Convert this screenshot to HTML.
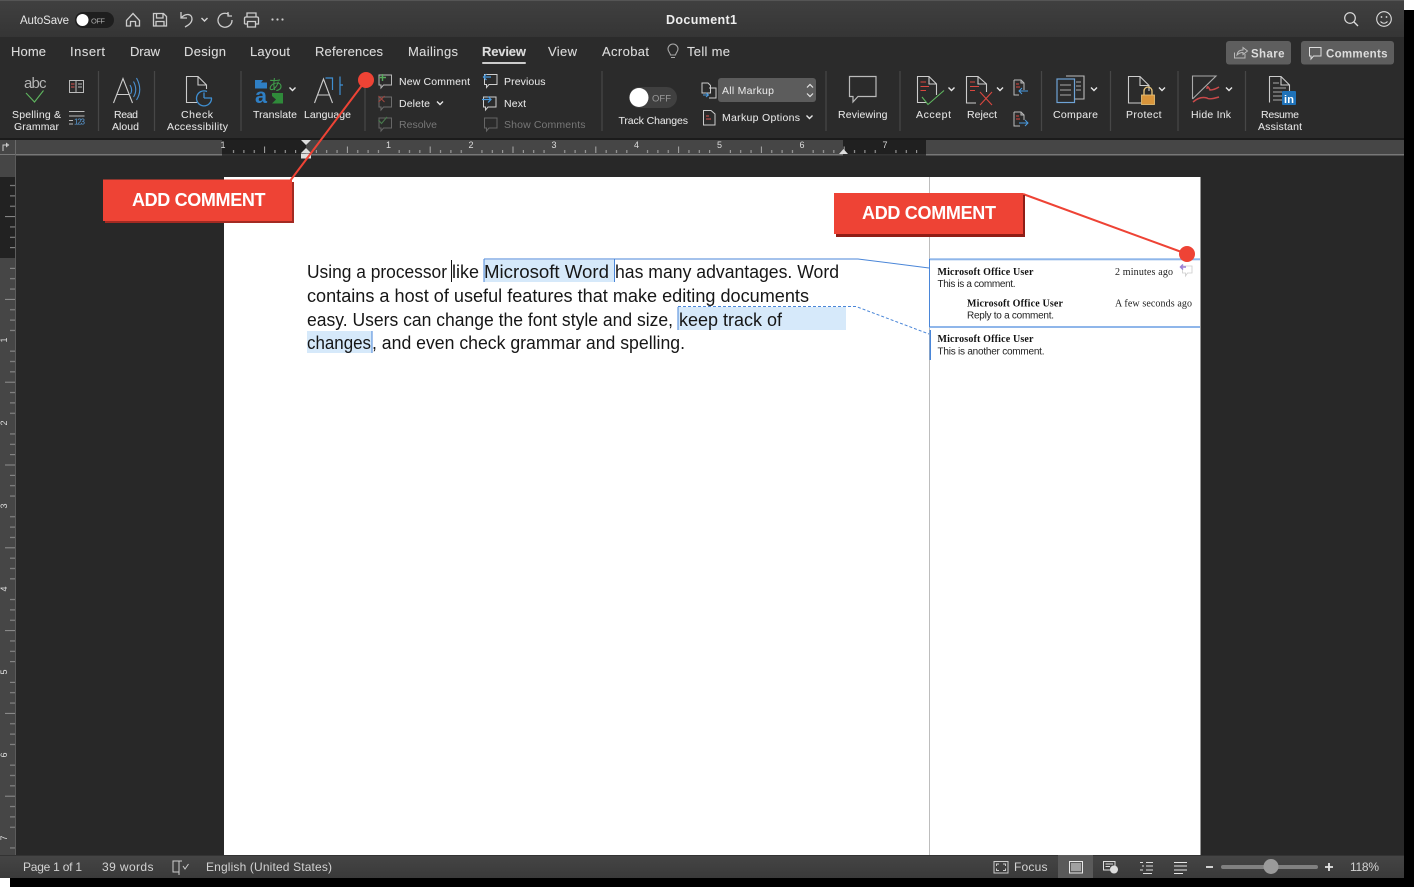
<!DOCTYPE html>
<html><head><meta charset="utf-8"><title>Document1</title>
<style>
html,body{margin:0;padding:0;background:#fff;width:1415px;height:888px;overflow:hidden}
svg{display:block}
text{font-family:"Liberation Sans",sans-serif;fill:#e6e6e6}
.m{font-size:13px;fill:#dcdcdc;stroke:rgba(225,225,225,.35);stroke-width:.25px}
.r{font-size:10.5px;fill:#e8e8e8;stroke:rgba(225,225,225,.25);stroke-width:.2px}
.d{fill:#777;stroke:none}
.s{font-size:12px;fill:#d2d2d2}
.t{font-size:18.5px;fill:#161616}
.cb{font-family:"Liberation Serif",serif;font-size:10px;font-weight:700;fill:#111}
.cs{font-family:"Liberation Serif",serif;font-size:10px;fill:#222}
.c{font-size:10px;fill:#222}
.n{font-size:9px;fill:#ddd}
.cal{font-size:18px;font-weight:700;fill:#fff}
.i{fill:none;stroke:#c8c8c8;stroke-width:1.1}
</style></head><body>
<svg width="1415" height="888" viewBox="0 0 1415 888" xmlns="http://www.w3.org/2000/svg">
<defs>
<linearGradient id="tb" x1="0" y1="0" x2="0" y2="1"><stop offset="0" stop-color="#404040"/><stop offset="1" stop-color="#353535"/></linearGradient>
<linearGradient id="sb" x1="0" y1="0" x2="0" y2="1"><stop offset="0" stop-color="#454545"/><stop offset="1" stop-color="#3a3a3a"/></linearGradient>
<pattern id="hr" x="306" y="140" width="82.8" height="15" patternUnits="userSpaceOnUse">
<path d="M10.35 10v3M20.7 10v3M31.05 10v3M41.4 6.5v6.5M51.75 10v3M62.1 10v3M72.45 10v3" stroke="#a8a8a8" stroke-width="1" fill="none"/>
</pattern>
<pattern id="vr" x="0" y="258" width="15" height="82.8" patternUnits="userSpaceOnUse">
<path d="M10 10.35h5M10 20.7h5M10 31.05h5M5 41.4h10M10 51.75h5M10 62.1h5M10 72.45h5" stroke="#8f8f8f" stroke-width="1" fill="none"/>
</pattern>
<path id="chev" d="M-3-1.5L0 1.5L3-1.5" fill="none" stroke="#e6e6e6" stroke-width="1.4"/>
<path id="bub" d="M1.5 1H14V11H6L3.5 14V11H1.5Z"/>
</defs>

<rect x="10" y="10" width="1404" height="877" fill="#000"/>
<rect width="1404" height="878" fill="#282828"/>

<!-- title bar -->
<rect width="1404" height="37" fill="url(#tb)"/>
<rect width="1404" height="1" fill="#555"/>
<text x="20" y="24" font-size="11.5" fill="#ddd" textLength="49">AutoSave</text>
<rect x="75" y="12" width="39" height="16" rx="8" fill="#1e1e1e"/>
<circle cx="82.500" cy="20" r="6" fill="#fff"/>
<text x="91" y="23.500" font-size="7.500" style="fill:#aaa" textLength="14">OFF</text>
<path class="i" style="stroke:#ccc;stroke-width:1.3" d="M126.500 20.500L133 13.500L139.500 20.500V26H135.500V21.500H130.500V26H126.500Z"/>
<path class="i" style="stroke:#ccc;stroke-width:1.3" d="M153.500 13.500H163.500L166.500 16.500V26H153.500ZM156.500 13.500V18H163V13.500M156 26V21.500H164V26"/>
<path class="i" style="stroke:#ccc;stroke-width:1.3" d="M181 12V18H187M181 18C186 12.500 192 14 192 19C192 22 189 25 185 27"/>
<use href="#chev" x="204.500" y="19.500" style="opacity:.9"/>
<path class="i" style="stroke:#ccc;stroke-width:1.3" d="M229 14.500A7 7 0 1 0 232 20M228 12V16H232"/>
<path class="i" style="stroke:#ccc;stroke-width:1.3" d="M247 17V13H256V17M244.500 24V18.500Q244.500 17 246 17H257Q258.500 17 258.500 18.500V24H255M248 24H244.500M247.500 21.500H255.500V27H247.500Z"/>
<g fill="#ccc"><circle cx="272.500" cy="19.500" r="1.100"/><circle cx="277.500" cy="19.500" r="1.100"/><circle cx="282.500" cy="19.500" r="1.100"/></g>
<text x="666" y="24" font-size="12.500" font-weight="700" style="fill:#eee" textLength="71">Document1</text>
<circle cx="1350" cy="18" r="5.300" fill="none" stroke="#ddd" stroke-width="1.200"/><path d="M1354 22L1358 26" stroke="#ddd" stroke-width="1.300"/>
<circle cx="1384" cy="19" r="7.300" fill="none" stroke="#ddd" stroke-width="1.100"/><circle cx="1381.500" cy="17" r=".9" fill="#ddd"/><circle cx="1386.500" cy="17" r=".9" fill="#ddd"/><path d="M1380.500 21.500Q1384 25 1387.500 21.500" fill="none" stroke="#ddd"/>

<!-- ribbon -->
<rect y="37" width="1404" height="101" fill="#2b2b2b"/>
<text class="m" x="11" y="56" textLength="35">Home</text>
<text class="m" x="70" y="56" textLength="35">Insert</text>
<text class="m" x="130" y="56" textLength="30">Draw</text>
<text class="m" x="184" y="56" textLength="42">Design</text>
<text class="m" x="250" y="56" textLength="40">Layout</text>
<text class="m" x="315" y="56" textLength="68">References</text>
<text class="m" x="408" y="56" textLength="50">Mailings</text>
<text class="m" x="482" y="56" textLength="44" style="font-weight:700">Review</text>
<rect x="482" y="62" width="44" height="2" rx="1" fill="#ccc"/>
<text class="m" x="548" y="56" textLength="29">View</text>
<text class="m" x="602" y="56" textLength="47">Acrobat</text>
<text class="m" x="687" y="56" textLength="43">Tell me</text>
<path d="M670.500 55C670 52.500 668 51.500 668 49A5 5 0 0 1 678 49C678 51.500 676 52.500 675.500 55ZM671 57.500H675" fill="none" stroke="#aaa" stroke-width="1.100"/>

<rect x="1226" y="41" width="65" height="23.500" rx="3" fill="#5e5e5e"/>
<path d="M1234.500 52.500V58H1245V54M1237 55C1237.500 51.500 1240 50 1243 50V47.500L1247.500 51L1243 54.500V52.500C1240.500 52.500 1238.500 53.500 1237 55Z" fill="none" stroke="#bbb" stroke-width="1"/>
<text x="1251" y="57.500" font-size="11.500" font-weight="700" style="fill:#ddd" textLength="33.500">Share</text>
<rect x="1301" y="41" width="93" height="23.500" rx="3" fill="#5e5e5e"/>
<path d="M1309.500 47.500H1321V56H1313.500L1311 59V56H1309.500Z" fill="none" stroke="#ddd" stroke-width="1"/>
<text x="1326" y="57.500" font-size="11.500" font-weight="700" style="fill:#ddd" textLength="61.500">Comments</text>

<!-- separators -->
<path d="M98.500 71V131M154.500 71V131M241 71V131M365 80V131M602 71V131M826 71V131M900 71V131M1041.500 71V131M1110.500 71V131M1178 71V131M1245.500 71V131" stroke="#474747" stroke-width="1.200"/>

<!-- proofing -->
<text x="24" y="88" font-size="15" style="fill:#b5b5b5" textLength="22.500">abc</text>
<path d="M26 93L34.500 102L43.500 90.500" fill="none" stroke="#5fb65f" stroke-width="1.100"/>
<path d="M69.500 80.500H76V92.500H69.500ZM76 80.500H83.500V92.500H76M78 84H82M78 87H82" fill="none" stroke="#bbb" stroke-width="1"/>
<path d="M71 84H74.500M71 87H74.500" stroke="#d9534f" fill="none"/>
<path d="M69 111.500H84.500M69 116H84.500M69 120.500H73M69 124H73" stroke="#bbb" stroke-width="1" fill="none"/>
<text x="74" y="124.500" font-size="8" style="fill:#5a9bd5" textLength="11">123</text>
<text class="r" x="12" y="118" textLength="49">Spelling &amp;</text>
<text class="r" x="14" y="130" textLength="45">Grammar</text>

<path d="M113.500 103L123 78.500L132.500 103M117 94.500H129.500" fill="none" stroke="#ccc" stroke-width="1.100"/>
<path d="M130 85Q133 90 130.500 94M133.500 81.500Q138 90 133.500 97M136.500 78Q143 90 136.500 100" fill="none" stroke="#4a90d0" stroke-width="1.100"/>
<text class="r" x="114" y="118" textLength="24">Read</text>
<text class="r" x="112" y="130" textLength="27">Aloud</text>

<path d="M197 102.500H186.500V76.500H198L206.500 85V89M198 76.500V85H206.500" fill="none" stroke="#ccc" stroke-width="1.100"/>
<path d="M207 91.500A7.500 7.500 0 1 0 211.500 98M204 98V92.500M204 98H212" fill="none" stroke="#3f8fd2" stroke-width="1.300"/>
<text class="r" x="181" y="118" textLength="32">Check</text>
<text class="r" x="167" y="130" textLength="61">Accessibility</text>

<path d="M255 80L263 80L261 82.500H267V88.500H255Z" fill="#2f7fc4"/>
<path d="M272 93H283V103.500H272L276 99.500L272 96Z" fill="#2f8a3a"/>
<text x="255" y="103" font-size="21" font-weight="700" style="fill:#2f7fc4" textLength="12" lengthAdjust="spacingAndGlyphs">a</text>
<text x="268" y="90" font-size="15" style="font-family:'Noto Sans CJK JP',sans-serif;fill:#3f9a4a" textLength="15">あ</text>
<use href="#chev" x="292.500" y="89"/>
<text class="r" x="253" y="118" textLength="44">Translate</text>

<path d="M314.500 103L323.500 79L332.500 103M318 95H329.500" fill="none" stroke="#ccc" stroke-width="1.100"/>
<path d="M325.500 78H332.500V90M340 76.500V95M340 85H343" fill="none" stroke="#3f8fd2" stroke-width="1.200"/>
<text class="r" x="304" y="118" textLength="47">Language</text>

<!-- comment commands -->
<g transform="translate(377.500 74)"><use href="#bub" fill="none" stroke="#b8b8b8"/><path d="M5 0V7M1.500 3.500H8.500" stroke="#58a85c" stroke-width="1.400" fill="none"/></g>
<text class="r" x="399" y="85" textLength="71">New Comment</text>
<g transform="translate(377.500 96)"><use href="#bub" fill="none" stroke="#6d6d6d"/><path d="M1 0L7 6M7 0L1 6" stroke="#a0463f" stroke-width="1" fill="none"/></g>
<text class="r" x="399" y="107" textLength="31">Delete</text>
<use href="#chev" x="440" y="103"/>
<g transform="translate(377.500 117)"><use href="#bub" fill="none" stroke="#666"/><path d="M1 3L4 6.500L9.500 0" stroke="#48794c" stroke-width="1.100" fill="none"/></g>
<text class="r d" x="399" y="128" textLength="38">Resolve</text>

<g transform="translate(483 73.500)"><use href="#bub" fill="none" stroke="#cfcfcf"/><path d="M8 3.500H0.500M3.500 .5L.5 3.500L3.500 6.500" stroke="#4a9be0" stroke-width="1.200" fill="none"/></g>
<text class="r" x="504" y="85" textLength="41.500">Previous</text>
<g transform="translate(482 96)"><use href="#bub" fill="none" stroke="#cfcfcf"/><path d="M0 3.500H9M6 .5L9 3.500L6 6.500" stroke="#4a9be0" stroke-width="1.200" fill="none"/></g>
<text class="r" x="504" y="107" textLength="22">Next</text>
<g transform="translate(483 117)"><use href="#bub" fill="none" stroke="#666"/></g>
<text class="r d" x="504" y="128" textLength="81.500">Show Comments</text>

<!-- track changes -->
<rect x="629" y="87" width="48" height="21" rx="10.500" fill="#404040"/>
<circle cx="639" cy="97.500" r="9.500" fill="#fff"/>
<text x="652" y="101.500" font-size="9.500" style="fill:#999" textLength="19">OFF</text>
<text class="r" x="618.500" y="124" textLength="69.500">Track Changes</text>
<path d="M702 83H708L710.500 85.500V93H702ZM709 88H716V98H709" fill="none" stroke="#ccc" stroke-width="1"/>
<path d="M703 95H708M706 93L708.500 95L706 97" fill="none" stroke="#4a9be0"/>
<rect x="718" y="78" width="98" height="24" rx="3" fill="#5c5c5c"/>
<text class="r" x="722" y="94" textLength="52">All Markup</text>
<path d="M807 87.500L810 84.500L813 87.500M807 93.500L810 96.500L813 93.500" fill="none" stroke="#e6e6e6" stroke-width="1.200"/>
<path d="M703.500 110.500H711L715 114V125H703.500Z" fill="none" stroke="#ccc" stroke-width="1"/><path d="M706 116H709M706 119H711" stroke="#d9534f"/>
<text class="r" x="722" y="121" textLength="78">Markup Options</text>
<use href="#chev" x="809.500" y="117"/>

<path d="M849.500 76.500H876V96.500H858L853 102V96.500H849.500Z" fill="none" stroke="#bbb" stroke-width="1.200"/>
<text class="r" x="838" y="118" textLength="49.500">Reviewing</text>

<path d="M927 102.500H917.500V76.500H929L936.500 84V95M929 76.500V84H936.500" fill="none" stroke="#ccc" stroke-width="1.100"/>
<path d="M920.500 82H926M920.500 86.500H929M920.500 90.500H926" stroke="#d9473f" stroke-width="1" fill="none"/>
<path d="M922 97L928 104.500L944 90.500" fill="none" stroke="#5fb65f" stroke-width="1.100"/>
<text class="r" x="916" y="118" textLength="35">Accept</text>
<use href="#chev" x="951.500" y="89"/>

<path d="M976 103H966.500V76.500H978L986.500 84V92M978 76.500V84H986.500" fill="none" stroke="#ccc" stroke-width="1.100"/>
<path d="M970 82H975M970 86.500H979M970 90.500H975" stroke="#d9473f" stroke-width="1" fill="none"/>
<path d="M980 92L992 105M992 92L980 105" stroke="#d9473f" stroke-width="1.100" fill="none"/>
<text class="r" x="967" y="118" textLength="30">Reject</text>
<use href="#chev" x="1000" y="89"/>
<path d="M1014 80H1021L1024 83V90M1014 80V95H1019M1021 80V83H1024" fill="none" stroke="#bbb" stroke-width="1"/><path d="M1016 84H1019M1016 87H1020" stroke="#d9473f"/>
<path d="M1028 91H1019M1022 88L1019 91L1022 94" stroke="#4a9be0" fill="none"/>
<path d="M1014 112H1021L1024 115V120M1014 112V126H1020M1021 112V115H1024" fill="none" stroke="#bbb" stroke-width="1"/><path d="M1016 116H1019M1016 119H1020" stroke="#d9473f"/>
<path d="M1019 123H1028M1025 120L1028 123L1025 126" stroke="#4a9be0" fill="none"/>

<path d="M1066 76H1084V99H1074" fill="none" stroke="#bbb" stroke-width="1.100"/>
<path d="M1076 82H1081M1076 86H1081M1076 90H1081" stroke="#aaa"/>
<rect x="1057" y="79" width="17.500" height="23.500" fill="#2b2b2b" stroke="#6ea3d6" stroke-width="1.200"/>
<path d="M1060 85H1071M1060 90H1071M1060 95H1071" stroke="#aaa"/>
<text class="r" x="1053" y="118" textLength="45">Compare</text>
<use href="#chev" x="1094" y="89"/>

<path d="M1141 103H1128.500V76.500H1140L1149 85.500V91M1140 76.500V85.500H1149" fill="none" stroke="#ccc" stroke-width="1.100"/>
<path d="M1144 95V91A4 4 0 0 1 1152 91V95" fill="none" stroke="#eac67c" stroke-width="1.300"/>
<rect x="1141.500" y="95" width="13" height="9.500" fill="#d9953b" stroke="#eac67c" stroke-width=".8"/>
<text class="r" x="1126" y="118" textLength="35.500">Protect</text>
<use href="#chev" x="1162" y="89"/>

<path d="M1192.500 99V76H1216L1192.500 99" fill="none" stroke="#aaa" stroke-width="1.100"/>
<path d="M1207 89Q1207 84 1210 90Q1214 90 1219 87M1193 102Q1200 96 1207 98Q1209 100 1219 97" fill="none" stroke="#c9494a" stroke-width="1.500"/>
<text class="r" x="1191" y="118" textLength="40">Hide Ink</text>
<use href="#chev" x="1229" y="89"/>

<path d="M1269.500 102.500V76.500H1281L1289.500 85V91M1281 76.500V85H1289.500" fill="none" stroke="#ccc" stroke-width="1.100"/>
<path d="M1273 83H1279M1273 88H1286M1273 92H1282M1273 96H1282M1273 100H1282" stroke="#aaa" fill="none"/>
<rect x="1282" y="91" width="14" height="14" rx="1" fill="#1f72b8"/>
<text x="1284" y="103" font-size="11" font-weight="700" style="fill:#fff" textLength="10">in</text>
<text class="r" x="1261" y="118" textLength="38">Resume</text>
<text class="r" x="1258" y="130" textLength="44">Assistant</text>

<!-- horizontal ruler -->
<rect y="138" width="1404" height="2" fill="#1b1b1b"/>
<rect y="140" width="1404" height="15" fill="#464646"/>
<rect x="222" y="140" width="84" height="14" fill="#202020"/>
<rect x="843" y="140" width="83" height="14" fill="#202020"/>
<rect x="0" y="154" width="1404" height="1.500" fill="#777"/>
<rect x="222" y="154" width="84" height="1.500" fill="#333"/>
<rect x="843" y="154" width="83" height="1.500" fill="#333"/>
<rect x="222" y="140" width="704" height="15" fill="url(#hr)"/>
<rect x="15" y="140" width="1" height="38" fill="#6a6a6a"/>
<path d="M3 151V145H7M6.500 143.500V146.500L8.500 145Z" fill="none" stroke="#ccc" stroke-width="1"/>
<g text-anchor="middle"><text class="n" x="223" y="148">1</text><text class="n" x="388.500" y="148">1</text><text class="n" x="471" y="148">2</text><text class="n" x="554" y="148">3</text><text class="n" x="636.500" y="148">4</text><text class="n" x="719.500" y="148">5</text><text class="n" x="802" y="148">6</text><text class="n" x="885" y="148">7</text></g>
<path d="M301 140H311L306 145ZM301 153L306 148L311 153ZM301 153.500H311V158.500H301Z" fill="#ddd"/>
<path d="M839 154L843.500 149L848 154Z" fill="#ddd"/>

<!-- vertical ruler -->
<rect x="0" y="155" width="15" height="700" fill="#464646"/>
<rect x="0" y="177" width="15" height="81" fill="#222"/>
<rect x="15" y="155" width="1" height="700" fill="#5c5c5c"/>
<rect x="0" y="177" width="15" height="678" fill="url(#vr)"/>
<g text-anchor="middle">
<text class="n" transform="translate(7 340) rotate(-90)">1</text>
<text class="n" transform="translate(7 423) rotate(-90)">2</text>
<text class="n" transform="translate(7 506) rotate(-90)">3</text>
<text class="n" transform="translate(7 589) rotate(-90)">4</text>
<text class="n" transform="translate(7 672) rotate(-90)">5</text>
<text class="n" transform="translate(7 755) rotate(-90)">6</text>
<text class="n" transform="translate(7 838) rotate(-90)">7</text>
</g>

<!-- page -->
<rect x="224" y="177" width="976.500" height="678" fill="#fff"/>
<rect x="929" y="177" width="1" height="678" fill="#bdbdbd"/>
<rect x="484" y="260" width="130" height="22" fill="#d6e9fa"/>
<rect x="678" y="307" width="168" height="23" fill="#d6e9fa"/>
<rect x="307" y="331" width="65" height="22" fill="#d6e9fa"/>
<path d="M484 259V282M614.500 259V282M678 307V330M372 331V353" stroke="#4a86d8" stroke-width="1" fill="none"/>
<path d="M451.500 260V282" stroke="#111" stroke-width="1"/>
<path d="M484 259H858L929 268" stroke="#4a86d8" stroke-width="1" fill="none"/>
<path d="M678 306.500H856L929 334" stroke="#4a86d8" stroke-width="1" stroke-dasharray="3 2" fill="none"/>

<text class="t" x="307" y="278" textLength="140" lengthAdjust="spacingAndGlyphs">Using a processor</text>
<text class="t" x="452" y="278" textLength="27" lengthAdjust="spacingAndGlyphs">like</text>
<text class="t" x="484" y="278" textLength="125" lengthAdjust="spacingAndGlyphs">Microsoft Word</text>
<text class="t" x="615" y="278" textLength="224" lengthAdjust="spacingAndGlyphs">has many advantages. Word</text>
<text class="t" x="307" y="302" textLength="502" lengthAdjust="spacingAndGlyphs">contains a host of useful features that make editing documents</text>
<text class="t" x="307" y="326" textLength="366" lengthAdjust="spacingAndGlyphs">easy. Users can change the font style and size,</text>
<text class="t" x="679" y="326" textLength="103" lengthAdjust="spacingAndGlyphs">keep track of</text>
<text class="t" x="307" y="349" textLength="64" lengthAdjust="spacingAndGlyphs">changes</text>
<text class="t" x="372" y="349" textLength="313" lengthAdjust="spacingAndGlyphs">, and even check grammar and spelling.</text>

<!-- comments -->
<rect x="929" y="258.300" width="271" height="2" fill="#8fb6ea"/>
<rect x="929" y="326" width="271" height="2" fill="#8fb6ea"/>
<rect x="929" y="259" width="1" height="68" fill="#4a86d8"/>
<rect x="929.500" y="330" width="1.500" height="30" fill="#4a86d8"/>
<text class="cb" x="937.500" y="275" textLength="96">Microsoft Office User</text>
<text class="cs" x="1115" y="275" textLength="58">2 minutes ago</text>
<text class="c" x="937.500" y="287" textLength="78">This is a comment.</text>
<path d="M1182.500 266H1192V273H1187.500L1185.500 276V273H1182.500Z" fill="#fff" stroke="#ccc" stroke-width=".8"/>
<path d="M1186 267H1180.500M1183 264.500L1180.500 267L1183 269.500" stroke="#9b7fd6" stroke-width="1.500" fill="none"/>
<text class="cb" x="967" y="306.500" textLength="96">Microsoft Office User</text>
<text class="cs" x="1115" y="306.500" textLength="77">A few seconds ago</text>
<text class="c" x="967" y="318.500" textLength="87">Reply to a comment.</text>
<text class="cb" x="937.500" y="342" textLength="96">Microsoft Office User</text>
<text class="c" x="937.500" y="354.500" textLength="107">This is another comment.</text>

<!-- status bar -->
<rect y="855" width="1404" height="23" fill="url(#sb)"/>
<rect y="855" width="1404" height="1" fill="#333"/>
<text class="s" x="23" y="871" textLength="59">Page 1 of 1</text>
<text class="s" x="102" y="871" textLength="51.500">39 words</text>
<path d="M173 861H179V872H173ZM179 861V875M179 861H182M183 866L185 869L188.500 864" fill="none" stroke="#ccc" stroke-width="1"/>
<text class="s" x="206" y="871" textLength="126">English (United States)</text>
<path d="M994 861.500H1008V873H994Z" fill="none" stroke="#ccc" stroke-width="1"/>
<path d="M996.500 866V864H999M1003 864H1005.500V866M996.500 868.500V870.500H999M1003 870.500H1005.500V868.500" fill="none" stroke="#ccc" stroke-width="1"/>
<text class="s" x="1014" y="871" textLength="33.500">Focus</text>
<rect x="1058" y="855" width="35" height="23" fill="#5a5a5a"/>
<path d="M1069.500 861.500H1082.500V873H1069.500ZM1071 864H1081M1071 866H1081M1071 868H1081M1071 870H1081" fill="none" stroke="#e8e8e8" stroke-width="1"/>
<path d="M1103.500 861.500H1115V870H1103.500ZM1105.500 864H1113M1105.500 866.500H1110" fill="none" stroke="#ddd" stroke-width="1"/>
<circle cx="1114" cy="869.500" r="4" fill="#ddd"/>
<path d="M1140 862.500H1143M1146 862.500H1153M1142 866H1144M1146 866H1153M1140 870H1143M1146 870H1153M1143 873.500H1152" stroke="#ddd" stroke-width="1" fill="none"/>
<path d="M1174 862.500H1187M1174 866H1187M1174 870H1187M1174 873.500H1183" stroke="#e8e8e8" stroke-width="1" fill="none"/>
<path d="M1206 867H1213M1325 867H1333M1329 863V871" stroke="#e6e6e6" stroke-width="1.800" fill="none"/>
<rect x="1221" y="865" width="97" height="4" rx="2" fill="#808080"/>
<circle cx="1271" cy="866.500" r="7.500" fill="#9a9a9a"/>
<text class="s" x="1350" y="871" textLength="29">118%</text>

<!-- callout 1 -->
<path d="M366 80L290 181" stroke="#ee4335" stroke-width="2" fill="none"/>
<circle cx="366" cy="80" r="8" fill="#ee4335"/>
<rect x="105" y="182" width="189" height="41" fill="#a32a22"/>
<rect x="103" y="179.500" width="189" height="41.500" fill="#ee4335"/>
<text class="cal" x="132" y="206" textLength="133.500">ADD COMMENT</text>

<!-- callout 2 -->
<path d="M1023 194L1187 254" stroke="#ee4335" stroke-width="2" fill="none"/>
<circle cx="1187" cy="254" r="8" fill="#ee4335"/>
<rect x="836" y="195" width="189" height="42" fill="#8f1d16"/>
<rect x="834" y="193" width="189" height="41" fill="#ee4335"/>
<text class="cal" x="862" y="219" textLength="134">ADD COMMENT</text>
</svg>
</body></html>
